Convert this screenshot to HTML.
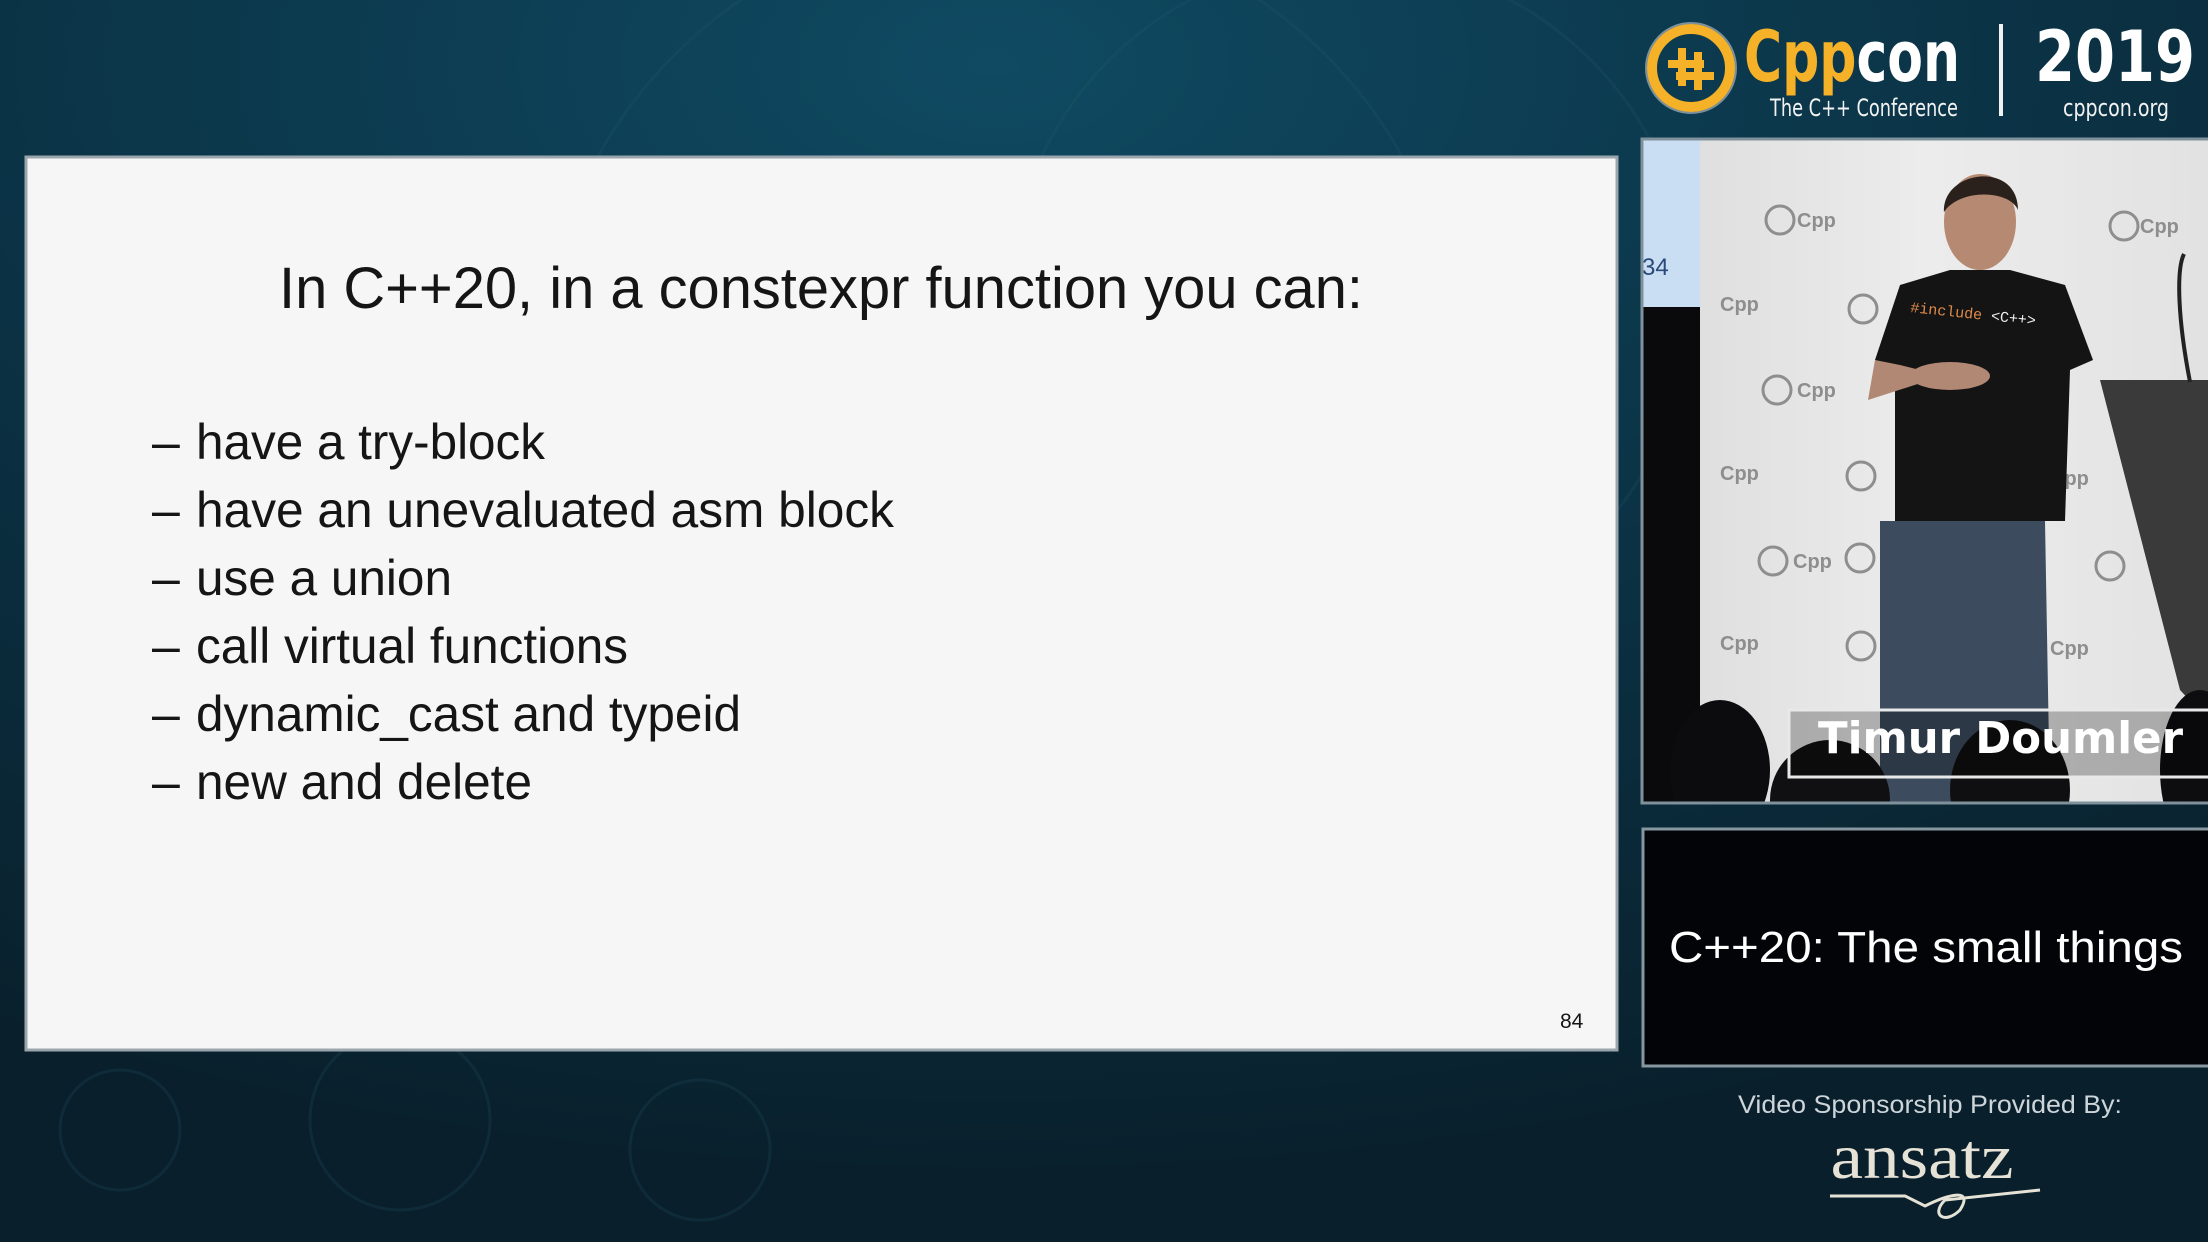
<!DOCTYPE html>
<html><head><meta charset="utf-8"><style>
html,body{margin:0;padding:0;width:2208px;height:1242px;overflow:hidden;background:#0b2533}
svg{display:block}
</style></head><body>
<svg width="2208" height="1242" viewBox="0 0 2208 1242" xmlns="http://www.w3.org/2000/svg">
<defs>
<radialGradient id="bg" cx="0.45" cy="0.05" r="0.9">
<stop offset="0" stop-color="#0f4a62"/><stop offset="0.5" stop-color="#0b3346"/><stop offset="1" stop-color="#09202c"/>
</radialGradient>
<linearGradient id="wall" x1="0" y1="0" x2="1" y2="0"><stop offset="0" stop-color="#dcdcdc"/><stop offset="0.5" stop-color="#ececec"/><stop offset="1" stop-color="#e2e2e2"/></linearGradient>
</defs>
<rect width="2208" height="1242" fill="url(#bg)"/>
<g fill="none" stroke="#2a5f74" stroke-opacity="0.18" stroke-width="3">
<circle cx="1000" cy="380" r="460"/><circle cx="1350" cy="300" r="340"/>
<circle cx="400" cy="1120" r="90"/><circle cx="700" cy="1150" r="70"/><circle cx="120" cy="1130" r="60"/>
</g>
<!-- slide -->
<rect x="26" y="157" width="1591" height="893" fill="#f6f6f6" stroke="#9aa6ac" stroke-width="3"/>
<g font-family="Liberation Sans, Arial, sans-serif" fill="#151515">
<text x="279" y="308" font-size="58" textLength="1084" lengthAdjust="spacingAndGlyphs">In C++20, in a constexpr function you can:</text>
<g font-size="50">
<text x="152" y="459">–</text><text x="196" y="459" textLength="349" lengthAdjust="spacingAndGlyphs">have a try-block</text>
<text x="152" y="527">–</text><text x="196" y="527" textLength="698" lengthAdjust="spacingAndGlyphs">have an unevaluated asm block</text>
<text x="152" y="595">–</text><text x="196" y="595" textLength="256" lengthAdjust="spacingAndGlyphs">use a union</text>
<text x="152" y="663">–</text><text x="196" y="663" textLength="432" lengthAdjust="spacingAndGlyphs">call virtual functions</text>
<text x="152" y="731">–</text><text x="196" y="731" textLength="545" lengthAdjust="spacingAndGlyphs">dynamic_cast and typeid</text>
<text x="152" y="799">–</text><text x="196" y="799" textLength="336" lengthAdjust="spacingAndGlyphs">new and delete</text>
</g>
<text x="1560" y="1028" font-size="21">84</text>
</g>
<!-- logo -->
<circle cx="1691" cy="68" r="39" fill="none" stroke="#f5b127" stroke-width="10"/>
<circle cx="1691" cy="68" r="45" fill="none" stroke="#c8ccd0" stroke-width="2" stroke-opacity="0.6"/>
<g fill="#f5b127">
<rect x="1678" y="48" width="8" height="38"/><rect x="1694" y="52" width="8" height="38"/>
<rect x="1668" y="60" width="36" height="8"/><rect x="1676" y="72" width="38" height="8"/>
</g>
<text x="1744" y="81" font-family="DejaVu Sans Condensed, Liberation Sans Narrow, sans-serif" font-weight="bold" font-size="70" textLength="216" lengthAdjust="spacingAndGlyphs"><tspan fill="#f5b127">Cpp</tspan><tspan fill="#ffffff">con</tspan></text>
<text x="1770" y="116" font-family="DejaVu Sans Condensed, Liberation Sans Narrow, sans-serif" font-size="24" fill="#f2f2f2" textLength="188" lengthAdjust="spacingAndGlyphs">The C++ Conference</text>
<rect x="1999" y="24" width="4" height="92" fill="#f2f2f2"/>
<text x="2035" y="81" font-family="DejaVu Sans, Liberation Sans, sans-serif" font-weight="bold" font-size="70" fill="#ffffff" textLength="160" lengthAdjust="spacingAndGlyphs">2019</text>
<text x="2063" y="116" font-family="DejaVu Sans Condensed, Liberation Sans Narrow, sans-serif" font-size="24" fill="#f2f2f2" textLength="106" lengthAdjust="spacingAndGlyphs">cppcon.org</text>
<!-- video -->
<svg x="1642" y="139" width="566" height="664" viewBox="1642 139 566 664">
<rect x="1642" y="139" width="566" height="664" fill="url(#wall)"/>
<rect x="1642" y="139" width="58" height="168" fill="#c9def2"/>
<text x="1642" y="275" font-family="Liberation Sans, sans-serif" font-size="24" fill="#2a4a7a">34</text>
<rect x="1642" y="307" width="58" height="496" fill="#0a0a0c"/>
<g fill="none" stroke="#8e8e8e" stroke-width="3">
<circle cx="1780" cy="220" r="14"/><circle cx="1863" cy="309" r="14"/><circle cx="1777" cy="390" r="14"/><circle cx="1773" cy="561" r="14"/><circle cx="1860" cy="558" r="14"/><circle cx="2124" cy="226" r="14"/><circle cx="2110" cy="566" r="14"/><circle cx="1861" cy="476" r="14"/><circle cx="1861" cy="646" r="14"/>
</g>
<g font-family="Liberation Sans, sans-serif" font-weight="bold" font-size="20" fill="#8e8e8e">
<text x="1797" y="227">Cpp</text><text x="1797" y="397">Cpp</text><text x="1793" y="568">Cpp</text><text x="2140" y="233">Cpp</text><text x="1720" y="311">Cpp</text><text x="1720" y="480">Cpp</text><text x="2050" y="485">Cpp</text><text x="2050" y="655">Cpp</text><text x="1720" y="650">Cpp</text>
</g>
<polygon points="2100,380 2208,380 2208,720 2180,690" fill="#3a3a3a"/>
<path d="M2184,254 C2176,270 2178,320 2190,382" stroke="#222" stroke-width="4" fill="none"/>
<ellipse cx="1980" cy="222" rx="36" ry="48" fill="#b68a72"/>
<path d="M1944,212 C1942,170 2018,160 2018,210 C2010,190 1960,188 1944,212Z" fill="#2b211c"/>
<path d="M1875,360 L1900,285 L1950,270 L2010,270 L2065,285 L2093,360 L2070,370 L2065,521 L1895,521 L1895,370Z" fill="#141414"/>
<path d="M1875,360 L1868,400 L1930,380 L1960,380 L1900,365Z" fill="#b08874"/>
<ellipse cx="1950" cy="376" rx="40" ry="14" fill="#b08874"/>
<text x="1910" y="312" font-family="Liberation Mono, monospace" font-size="15" fill="#e08a4a" transform="rotate(6 1910 312)">#include <tspan fill="#eee">&lt;C++&gt;</tspan></text>
<path d="M1880,521 L2045,521 L2050,803 L1880,803Z" fill="#3d4b5e"/>
<ellipse cx="1720" cy="770" rx="50" ry="70" fill="#0c0c0e"/>
<ellipse cx="1830" cy="800" rx="60" ry="60" fill="#101012"/>
<ellipse cx="2010" cy="790" rx="60" ry="70" fill="#0f0f11"/>
<ellipse cx="2200" cy="770" rx="40" ry="80" fill="#0d0d0f"/>
<rect x="1789" y="710" width="430" height="67" fill="#000" fill-opacity="0.25" stroke="#e8e8e8" stroke-width="3"/>
<text x="1818" y="753" font-family="DejaVu Sans, Liberation Sans, sans-serif" font-weight="bold" font-size="44" fill="#fff" textLength="365" lengthAdjust="spacingAndGlyphs">Timur Doumler</text>
</svg>
<rect x="1642" y="139" width="568" height="664" fill="none" stroke="#7f929c" stroke-width="3"/>
<rect x="1643" y="829" width="568" height="237" fill="#030407" stroke="#8797a0" stroke-width="3"/>
<text x="1926" y="962" text-anchor="middle" font-family="Liberation Sans, Arial, sans-serif" font-size="44" fill="#ffffff" textLength="514" lengthAdjust="spacingAndGlyphs">C++20: The small things</text>
<text x="1930" y="1113" text-anchor="middle" font-family="Liberation Sans, Arial, sans-serif" font-size="25" fill="#cdd5da" textLength="384" lengthAdjust="spacingAndGlyphs">Video Sponsorship Provided By:</text>
<text x="1922" y="1178" text-anchor="middle" font-family="Liberation Serif, serif" font-size="64" fill="#e6e2d6" textLength="183" lengthAdjust="spacingAndGlyphs">ansatz</text>
<path d="M1830,1196 L1905,1196 L1925,1206 C1945,1196 1975,1186 1960,1210 C1945,1225 1930,1215 1945,1200 L2040,1190" fill="none" stroke="#e6e2d6" stroke-width="3"/>
</svg>
</body></html>
